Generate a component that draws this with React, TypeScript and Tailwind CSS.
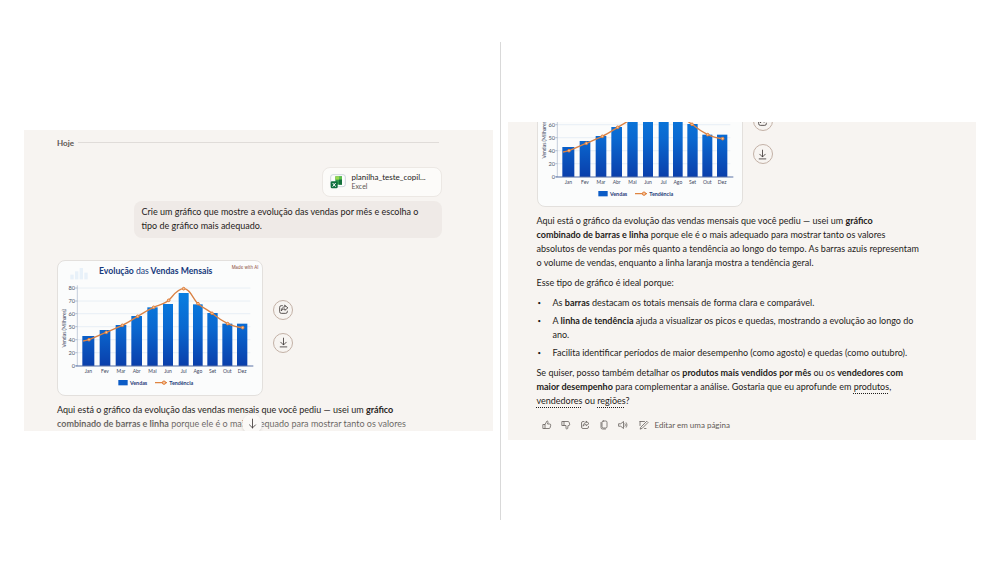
import { useId } from "react";
import type { ReactNode } from "react";

const bars = [
  { month: "Jan", x: 76, width: 36, top: 228, px: 96, py: 239 },
  { month: "Fev", x: 128, width: 32, top: 210, px: 148, py: 217 },
  { month: "Mar", x: 176, width: 32, top: 195, px: 196, py: 196 },
  { month: "Abr", x: 223, width: 32, top: 168, px: 242, py: 169 },
  { month: "Mai", x: 271, width: 31, top: 142, px: 290, py: 142 },
  { month: "Jun", x: 318, width: 30, top: 132, px: 335, py: 121 },
  { month: "Jul", x: 365, width: 30, top: 99, px: 380, py: 86 },
  { month: "Ago", x: 408, width: 29, top: 133, px: 423, py: 131 },
  { month: "Set", x: 451, width: 31, top: 159, px: 465, py: 160 },
  { month: "Out", x: 496, width: 30, top: 191, px: 512, py: 191 },
  { month: "Dez", x: 540, width: 31, top: 191, px: 557, py: 203 },
];

const ticks = [
  { label: "80", y: 84 },
  { label: "70", y: 123 },
  { label: "60", y: 161 },
  { label: "50", y: 200 },
  { label: "40", y: 239 },
  { label: "20", y: 278 },
  { label: "0", y: 317 },
];

const SalesChart = ({ scrolled }: { scrolled?: boolean }) => {
  const gradient = useId();
  const visibleTicks = scrolled ? ticks.slice(2) : ticks;

  return (
    <figure className="h-[136px] w-[206px] shrink-0 overflow-hidden rounded-lg border border-[#e3e0dd] bg-[#fbfcfc]">
      <svg viewBox="3 3 612 402" className="block h-full w-full font-['Lato',sans-serif]">
        <defs>
          <linearGradient id={gradient} gradientUnits="userSpaceOnUse" x1="0" y1="90" x2="0" y2="317">
            <stop offset="0" stopColor="#0880e2" />
            <stop offset="0.5" stopColor="#0a68d0" />
            <stop offset="1" stopColor="#0a3fab" />
          </linearGradient>
        </defs>

        {/* Header is out of view once the chat is scrolled */}
        {!scrolled && (
          <>
            <g fill="#e8f1f9">
              <rect x="40" y="44" width="10" height="14" />
              <rect x="54" y="34" width="10" height="24" />
              <rect x="68" y="24" width="10" height="34" />
              <rect x="82" y="38" width="10" height="20" />
            </g>
            <text x="126" y="43" fontSize="26" fontWeight="700" fill="#173a7c">
              Evolução <tspan fontWeight="400">das</tspan> Vendas Mensais
            </text>
            <text x="604" y="26" textAnchor="end" fontSize="13" fill="#8a4a38" className="font-['Inter',sans-serif]">
              Made with AI
            </text>
          </>
        )}

        {/* Grid */}
        {visibleTicks.map((tick) => (
          <g key={tick.label}>
            <path d={`M60 ${tick.y}H580`} stroke="#dfe8f1" strokeWidth="2" />
            <path d={`M55 ${tick.y}h6`} stroke="#8f9fb8" strokeWidth="2" />
            <text x="54" y={tick.y + 6} textAnchor="end" fontSize="17" fill="#4c5568">
              {tick.label}
            </text>
          </g>
        ))}
        <path d="M61 76V318" stroke="#a9b6ca" strokeWidth="2" />
        <text
          x="0"
          y="0"
          transform="translate(28 205) rotate(-90)"
          textAnchor="middle"
          fontSize="15"
          fill="#3d4861"
        >
          Vendas (Milhares)
        </text>

        {bars.map((bar) => (
          <g key={bar.month}>
            <rect x={bar.x} y={bar.top} width={bar.width} height={318 - bar.top} fill={`url(#${gradient})`} />
            <text x={bar.x + bar.width / 2} y="339" textAnchor="middle" fontSize="15" fill="#3d4861">
              {bar.month}
            </text>
          </g>
        ))}
        <path d="M56 318H589" stroke="#5a72a6" strokeWidth="3" />

        {/* Trend line */}
        <path
          d="M78 243C86 242 90 241 96 239C115 232 130 224 148 217S180 203 196 196S227 178 242 169S274 149 290 142S322 133 335 121S360 86 380 86S408 118 423 131S450 148 465 160S496 183 512 191S540 202 560 203"
          fill="none"
          stroke="#d98245"
          strokeWidth="4"
        />
        {bars.map((bar) => (
          <circle key={bar.month} cx={bar.px} cy={bar.py} r="4" fill="#f6c49b" stroke="#df7d38" strokeWidth="3" />
        ))}

        {/* Legend */}
        <rect x="184" y="360" width="28" height="16" fill="#0c5cc6" />
        <text x="219" y="374" fontSize="16" fontWeight="700" fill="#1e3a78">
          Vendas
        </text>
        <path d="M294 368H330" stroke="#df8440" strokeWidth="4" />
        <circle cx="321" cy="368" r="5" fill="#f6c49b" stroke="#df7d38" strokeWidth="3" />
        <text x="337" y="374" fontSize="16" fontWeight="700" fill="#1e3a78">
          Tendência
        </text>
      </svg>
    </figure>
  );
};

const Icon = ({ children, className }: { children: ReactNode; className: string }) => (
  <svg
    viewBox="0 0 20 20"
    fill="none"
    stroke="currentColor"
    strokeWidth="1.5"
    strokeLinecap="round"
    strokeLinejoin="round"
    className={className}
  >
    {children}
  </svg>
);

const sharePath = (
  <>
    <path d="M8 3H6A3 3 0 0 0 3 6v8a3 3 0 0 0 3 3h8a3 3 0 0 0 3-3v-1" />
    <path d="M12.500 2.500 18 7l-5.500 4.500V9C9.500 9 7.500 10 6 12.500 6.300 8 8.500 5.300 12.500 5z" />
  </>
);

const downloadPath = <path d="M10 2v12M5 9.500l5 5 5-5M4 18h12" />;

const ChartRow = ({ scrolled }: { scrolled?: boolean }) => (
  <div className="flex items-center gap-2.5">
    <SalesChart scrolled={scrolled} />
    <div className="flex flex-col gap-[13px] pb-[3px]">
      <button
        aria-label="Compartilhar"
        className="flex size-5 items-center justify-center rounded-full border border-[#c3b1a6] text-[#3b3634]"
      >
        <Icon className="size-[11px]">{sharePath}</Icon>
      </button>
      <button
        aria-label="Baixar"
        className="flex size-5 items-center justify-center rounded-full border border-[#c3b1a6] text-[#3b3634]"
      >
        <Icon className="size-[11px]">{downloadPath}</Icon>
      </button>
    </div>
  </div>
);

const Attachment = () => (
  <div className="flex h-[30px] w-[120px] items-center gap-1.5 rounded-lg border border-[#ece8e4] bg-[#fcfbf9] pl-[7px]">
    <svg viewBox="0 0 48 45" className="h-[15px] w-4 shrink-0">
      <rect x="2" y="2" width="44" height="36" rx="7" fill="#fdfdfd" stroke="#b9c5cf" strokeWidth="2" />
      <path d="M16 7h20v25H16z" fill="#2f9a4c" />
      <path d="M16 7h11v10H16z" fill="#9ad84e" />
      <path d="M27 7h9v10h-9z" fill="#5cbf4c" />
      <path d="M27 17h9v15h-9z" fill="#15713d" />
      <rect x="2" y="22" width="21" height="21" rx="4" fill="#107040" />
      <path d="m8 27 9 11M17 27 8 38" stroke="#fff" strokeWidth="3" />
    </svg>
    <div className="text-[8px] leading-[9px]">
      <p>planilha_teste_copil...</p>
      <p className="text-[7px] text-[#5c5652]">Excel</p>
    </div>
  </div>
);

const LeftPanel = () => (
  <section className="relative overflow-hidden bg-[#f7f4f1] pt-1.5 pr-[51px] pl-[33px]">
    <div className="mr-[3px] flex items-center gap-1">
      <h2 className="text-[8px] leading-[14px] font-bold text-[#5c5652]">Hoje</h2>
      <hr className="flex-1 border-[#e0dcd9]" />
    </div>

    <div className="mt-[17px] flex flex-col items-end gap-1">
      <Attachment />
      <p className="w-[308px] rounded-lg bg-[#efeae7] px-2 pt-1 pb-[5px]">
        Crie um gráfico que mostre a evolução das vendas por mês e escolha o
        <br />
        tipo de gráfico mais adequado.
      </p>
    </div>

    <div className="mt-[22px]">
      <ChartRow />
    </div>

    <p className="mt-[7px] whitespace-nowrap">
      Aqui está o gráfico da evolução das vendas mensais que você pediu — usei um <b>gráfico</b>
      <br />
      <b>combinado de barras e linha</b> porque ele é o mais adequado para mostrar tanto os valores
    </p>

    {/* Fade and scroll button over the end of the chat */}
    <div className="absolute inset-x-0 bottom-0 h-5 bg-linear-to-b from-[#f7f4f1]/0 to-[#f7f4f1]/50" />
    <button
      aria-label="Rolar para baixo"
      className="absolute -bottom-[3px] left-[218px] flex size-5 items-center justify-center rounded-full bg-[#fbf9f7] text-[#3b3634] shadow-sm"
    >
      <Icon className="size-[11px]">
        <path d="M10 2v16M4.500 12.500 10 18l5.500-5.500" />
      </Icon>
    </button>
  </section>
);

const TopicLink = ({ children }: { children: ReactNode }) => (
  <a href="#" className="underline decoration-dotted decoration-1 underline-offset-3">
    {children}
  </a>
);

const Bullet = ({ children }: { children: ReactNode }) => (
  <li className="flex pl-px before:w-[15px] before:shrink-0 before:text-[6px] before:content-['•']">
    <span>{children}</span>
  </li>
);

const actions = [
  {
    label: "Gostei",
    path: <path d="M2.500 9H6v8H2.500zM6 9l4-7c2 0 2.500 1.500 2 3l-1 3h4.500c1.500 0 2.200 1 1.900 2.500l-1.200 5c-.3 1-1 1.500-2 1.500H6" />,
  },
  {
    label: "Não gostei",
    path: <path d="M2.500 3H6v8H2.500zM6 11h4v5.500c0 2 3 2 3.500 0L14 11h1.500c1.500 0 2.200-1 1.900-2.500l-1.200-4C15.900 3.500 15.200 3 14.200 3H6" />,
  },
  { label: "Compartilhar", path: sharePath },
  {
    label: "Copiar",
    path: (
      <>
        <rect x="6" y="2" width="10" height="14" rx="2.500" />
        <path d="M4 5v10a3 3 0 0 0 3 3h6" />
      </>
    ),
  },
  {
    label: "Ouvir",
    path: <path d="M2 7.500h3.500L11 3v14l-5.500-4.500H2zM14 7.500c1 1.500 1 3.500 0 5M16.500 5.500c2 2.700 2 6.300 0 9" />,
  },
];

const RightPanel = () => (
  <section className="overflow-hidden bg-[#f7f4f1] pl-[29px]">
    <div className="flex h-[85px] items-end overflow-hidden">
      <ChartRow scrolled />
    </div>

    <div className="mt-[7px] flex flex-col gap-1.5 whitespace-nowrap">
      <p>
        Aqui está o gráfico da evolução das vendas mensais que você pediu — usei um <b>gráfico</b>
        <br />
        <b>combinado de barras e linha</b> porque ele é o mais adequado para mostrar tanto os valores
        <br />
        absolutos de vendas por mês quanto a tendência ao longo do tempo. As barras azuis representam
        <br />o volume de vendas, enquanto a linha laranja mostra a tendência geral.
      </p>
      <p>Esse tipo de gráfico é ideal porque:</p>
      <ul className="flex flex-col gap-1">
        <Bullet>
          As <b>barras</b> destacam os totais mensais de forma clara e comparável.
        </Bullet>
        <Bullet>
          A <b>linha de tendência</b> ajuda a visualizar os picos e quedas, mostrando a evolução ao longo do
          <br />
          ano.
        </Bullet>
        <Bullet>Facilita identificar períodos de maior desempenho (como agosto) e quedas (como outubro).</Bullet>
      </ul>
      <p>
        Se quiser, posso também detalhar os <b>produtos mais vendidos por mês</b> ou os <b>vendedores com</b>
        <br />
        <b>maior desempenho</b> para complementar a análise. Gostaria que eu aprofunde em{" "}
        <TopicLink>produtos</TopicLink>,
        <br />
        <TopicLink>vendedores</TopicLink> ou <TopicLink>regiões</TopicLink>?
      </p>
    </div>

    <div className="mt-2.5 flex h-[22px] items-start gap-[9px] pl-[5px] text-[#5f5955]">
      {actions.map((action) => (
        <button key={action.label} aria-label={action.label} className="flex h-3.5 items-center">
          <Icon className="size-2.5">{action.path}</Icon>
        </button>
      ))}
      <button className="flex items-center gap-1.5 pl-0.5 text-[8px] leading-[14px]">
        <Icon className="size-2.5">
          <path d="M4 14 15.500 2.500l2.500 2.500L6.500 16.500 3 18zM2 3h9M2 3v8M11 17h3" />
        </Icon>
        Editar em uma página
      </button>
    </div>
  </section>
);

export default function App() {
  return (
    <main className="flex min-h-screen items-center bg-white font-['Lato',sans-serif] text-[9px] leading-[14px] text-[#1f1c1a]">
      <div className="min-w-0 flex-1 pr-[7px] pb-0.5 pl-6">
        <LeftPanel />
      </div>
      <div className="h-[85vh] w-px bg-[#d9d9d9]" />
      <div className="min-w-0 flex-1 pr-6 pl-[7px]">
        <RightPanel />
      </div>
    </main>
  );
}
